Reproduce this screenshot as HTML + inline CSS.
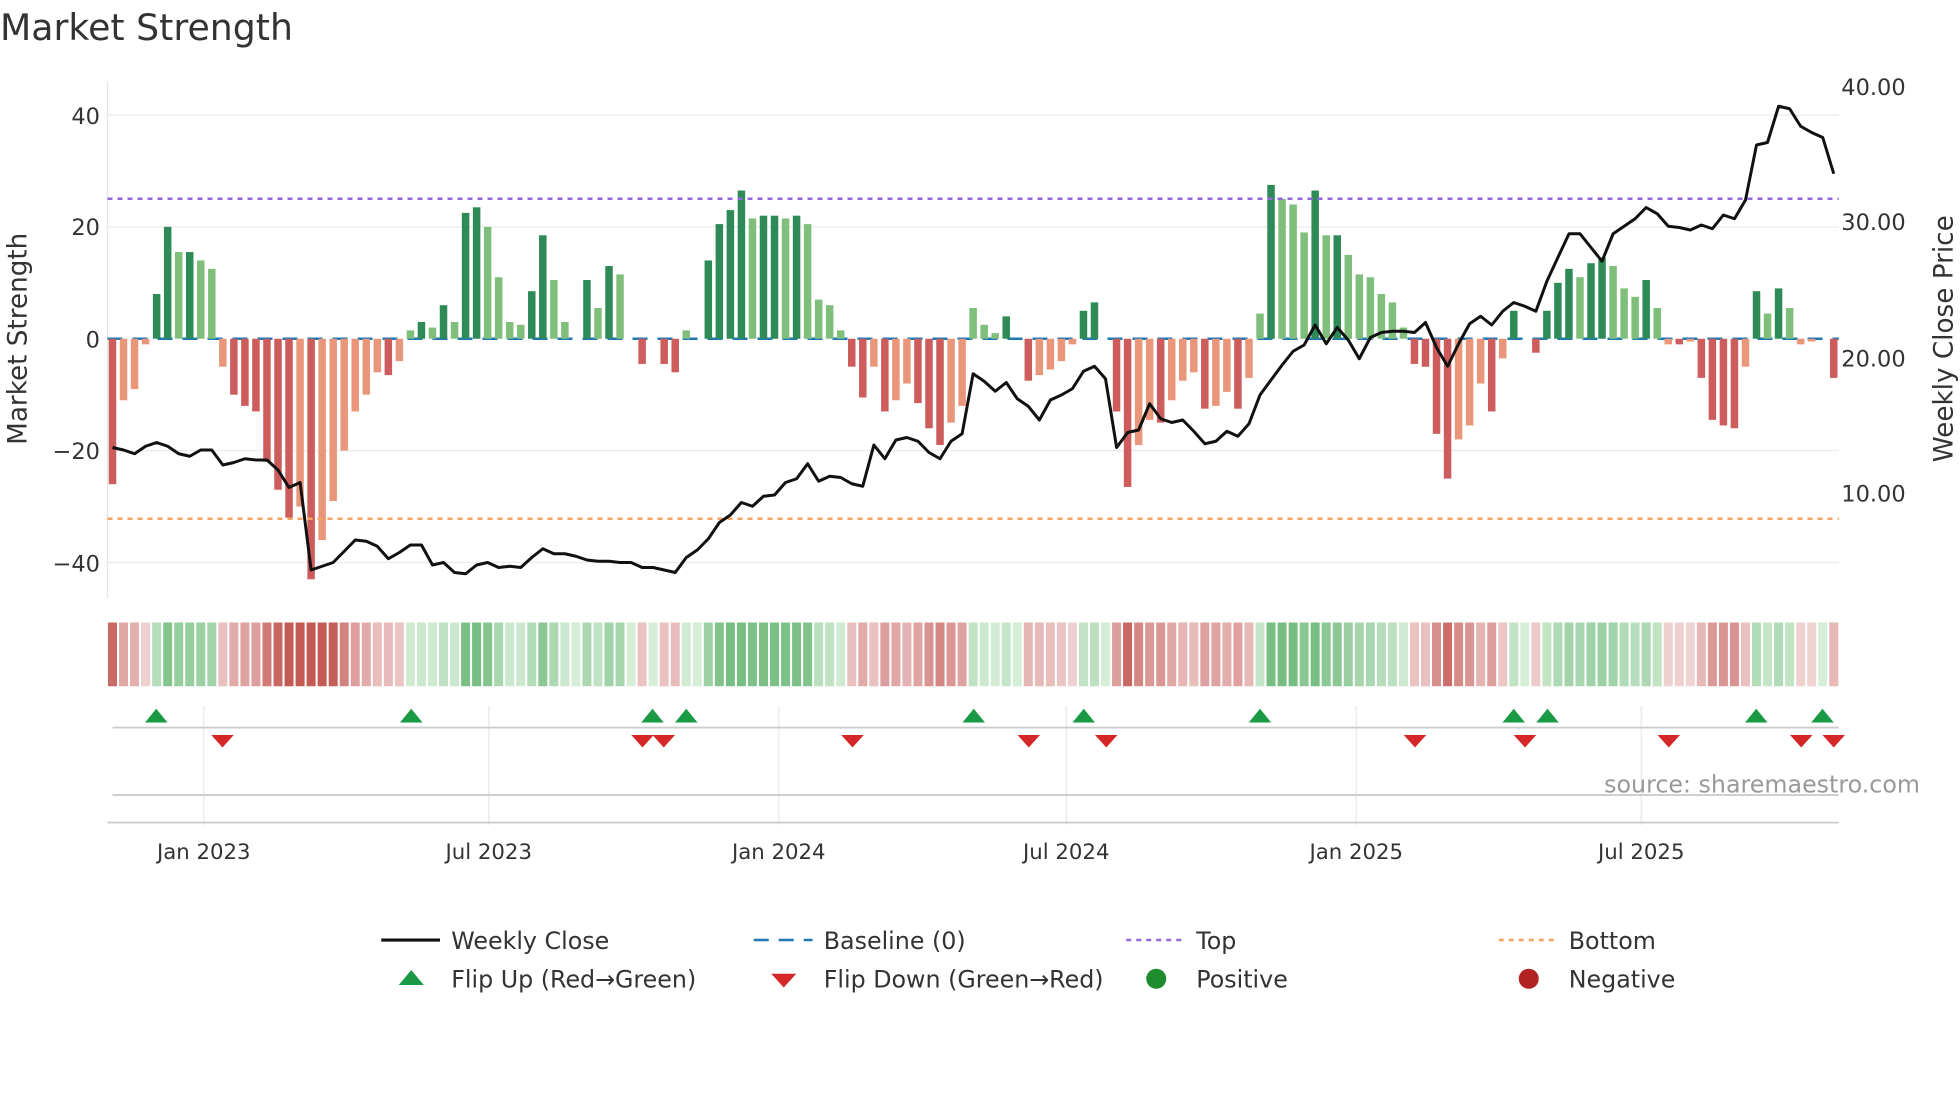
<!DOCTYPE html>
<html><head><meta charset="utf-8"><style>
html,body{margin:0;padding:0;background:#fff;width:1960px;height:1102px;overflow:hidden}
svg{display:block}
text{font-family:"DejaVu Sans","Liberation Sans",sans-serif;fill:#333}
</style></head><body>
<svg id="s" width="1960" height="1102" viewBox="0 0 1568 881.6" xmlns="http://www.w3.org/2000/svg">
<text x="0" y="32" font-size="29">Market Strength</text>
<g stroke="#ebebeb" stroke-width="1">
<line x1="86" x2="1471" y1="92" y2="92"/><line x1="86" x2="1471" y1="181.5" y2="181.5"/>
<line x1="86" x2="1471" y1="360.5" y2="360.5"/><line x1="86" x2="1471" y1="450" y2="450"/>
</g>
<line x1="86" x2="86" y1="65" y2="478" stroke="#e5e5e5"/>
<g font-size="18" text-anchor="end">
<text x="80" y="99">40</text><text x="80" y="188">20</text><text x="80" y="278">0</text>
<text x="80" y="367">−20</text><text x="80" y="457">−40</text>
</g>
<g font-size="18">
<text x="1473" y="76">40.00</text><text x="1473" y="184">30.00</text><text x="1473" y="293">20.00</text><text x="1473" y="401">10.00</text>
</g>
<text font-size="21" transform="translate(21,271) rotate(-90)" text-anchor="middle">Market Strength</text>
<text font-size="21" transform="translate(1562,271) rotate(-90)" text-anchor="middle">Weekly Close Price</text>
<line x1="86" x2="1471" y1="271" y2="271" stroke="#1f77b4" stroke-width="2" stroke-dasharray="12,8"/>
<g id="bars"></g>
<line x1="86" x2="1471" y1="159" y2="159" stroke="#9467dd" stroke-width="2" stroke-dasharray="4,4"/>
<line x1="86" x2="1471" y1="415" y2="415" stroke="#f4a460" stroke-width="2" stroke-dasharray="4,4"/>
<polyline id="close" fill="none" stroke="#111" stroke-width="2.4" stroke-linejoin="round"/>
<g id="heat"></g>
<g stroke="#e8e8e8">
<line x1="163" x2="163" y1="565" y2="660"/><line x1="391" x2="391" y1="565" y2="660"/><line x1="623" x2="623" y1="565" y2="660"/>
<line x1="853" x2="853" y1="565" y2="660"/><line x1="1085" x2="1085" y1="565" y2="660"/><line x1="1313" x2="1313" y1="565" y2="660"/>
</g>
<line x1="90" x2="1471" y1="582" y2="582" stroke="#ccc" stroke-width="1.5"/>
<line x1="90" x2="1471" y1="636" y2="636" stroke="#ccc" stroke-width="1.5"/>
<line x1="86" x2="1471" y1="658" y2="658" stroke="#ccc" stroke-width="1.5"/>
<g id="marks"></g>
<text x="1536" y="634" font-size="19" text-anchor="end" style="fill:#999">source: sharemaestro.com</text>
<g font-size="17" text-anchor="middle">
<text x="163" y="687">Jan 2023</text><text x="391" y="687">Jul 2023</text><text x="623" y="687">Jan 2024</text>
<text x="853" y="687">Jul 2024</text><text x="1085" y="687">Jan 2025</text><text x="1313" y="687">Jul 2025</text>
</g>
<g font-size="19">
<line x1="305" x2="352" y1="752" y2="752" stroke="#111" stroke-width="2.5"/><text x="361" y="759">Weekly Close</text>
<line x1="603" x2="650" y1="752" y2="752" stroke="#1f77b4" stroke-width="2" stroke-dasharray="12,8"/><text x="659" y="759">Baseline (0)</text>
<line x1="901" x2="948" y1="752" y2="752" stroke="#9467dd" stroke-width="2" stroke-dasharray="4,4"/><text x="957" y="759">Top</text>
<line x1="1199" x2="1246" y1="752" y2="752" stroke="#f4a460" stroke-width="2" stroke-dasharray="4,4"/><text x="1255" y="759">Bottom</text>
<polygon points="319,788 329,776 339,788" fill="#1a9a44"/><text x="361" y="790">Flip Up (Red→Green)</text>
<polygon points="617,779 637,779 627,790" fill="#d62728"/><text x="659" y="790">Flip Down (Green→Red)</text>
<circle cx="925" cy="783" r="8" fill="#1e8c2c"/><text x="957" y="790">Positive</text>
<circle cx="1223" cy="783" r="8" fill="#b22222"/><text x="1255" y="790">Negative</text>
</g>
</svg>
<script>
var v=[-26,-11,-9,-1,8,20,15.5,15.5,14,12.5,-5,-10,-12,-13,-22,-27,-32,-30,-43,-36,-29,-20,-13,-10,-6,-6.5,-4,1.5,3,2,6,3,22.5,23.5,20,11,3,2.5,8.5,18.5,10.5,3,0,10.5,5.5,13,11.5,0,-4.5,0,-4.5,-6,1.5,0,14,20.5,23,26.5,21.5,22,22,21.5,22,20.5,7,6,1.5,-5,-10.5,-5,-13,-11,-8,-11.5,-16,-19,-15,-12,5.5,2.5,1,4,0,-7.5,-6.5,-5.5,-4,-1,5,6.5,0,-13,-26.5,-19,-14.5,-15,-11,-7.5,-6,-12.5,-12,-9.5,-12.5,-7,4.5,27.5,25,24,19,26.5,18.5,18.5,15,11.5,11,8,6.5,2,-4.5,-5,-17,-25,-18,-15.5,-8,-13,-3.5,5,0,-2.5,5,10,12.5,11,13.5,14.5,13,9,7.5,10.5,5.5,-1,-1,-0.5,-7,-14.5,-15.5,-16,-5,8.5,4.5,9,5.5,-1,-0.5,0,-7];
var n=v.length,x0=90,x1=1467,dx=(x1-x0)/(n-1),b='',h='';
function ramp(a,c,t){return 'rgb('+a.map(function(q,i){return Math.round(q+(c[i]-q)*t)}).join(',')+')'}
for(var i=0;i<n;i++){var x=x0+i*dx,y=v[i],p=i?v[i-1]:0,dark=Math.abs(y)>=Math.abs(p);
var c=y>=0?(dark?'#2e8b57':'#7fbf7b'):(dark?'#cd5c5c':'#e9967a');
if(y!=0){var yy=271-y*4.475;b+='<rect x="'+(x-3)+'" y="'+Math.min(yy,271)+'" width="6" height="'+Math.abs(271-yy)+'" fill="'+c+'"/>';}
var t=Math.min(1,Math.abs(y)/30);
var hc=y>=0?ramp([214,238,216],[120,190,130],Math.min(1,t*1.3)):ramp([240,212,212],[196,90,84],t);
h+='<rect x="'+(x-3.6)+'" y="498" width="7.2" height="51" fill="'+hc+'"/>';}
document.getElementById('bars').innerHTML=b;document.getElementById('heat').innerHTML=h;
var cy=[358,360,363,357,354,357,363,365,360,360,372,370,367,368,368,376,390,386,456,453,450,441,432,433,437,447,442,436,436,452,450,458,459,452,450,454,453,454,446,439,443,443,445,448,449,449,450,450,454,454,456,458,446,440,431,418,412,402,405,397,396,386,383,371,385,381,382,387,389,356,367,352,350,353,362,367,353,347,299,305,313,306,319,325,336,320,316,311,297,293,303,358,346,344,323,335,338,336,345,355,353,345,349,339,316,304,292,281,276,260,275,262,272,287,270,266,265,265,266,258,278,293,275,259,253,260,249,242,245,249,225,206,187,187,198,209,187,181,175,166,171,181,182,184,180,183,172,175,160,116,114,85,87,101,106,110,139];
var pts=[];var m=cy.length,d2=(x1-x0)/(m-1);for(var j=0;j<m;j++)pts.push((x0+j*d2).toFixed(1)+','+cy[j]);
document.getElementById('close').setAttribute('points',pts.join(' '));
var up=[125,329,522,549,779,867,1008,1211,1238,1405,1458],dn=[178,514,531,682,823,885,1132,1220,1335,1441,1467],mk='';
up.forEach(function(x){mk+='<polygon points="'+(x-9)+',578 '+x+',567 '+(x+9)+',578" fill="#1a9a44"/>'});
dn.forEach(function(x){mk+='<polygon points="'+(x-9)+',588 '+(x+9)+',588 '+x+',598" fill="#d62728"/>'});
document.getElementById('marks').innerHTML=mk;
</script>
</body></html>
